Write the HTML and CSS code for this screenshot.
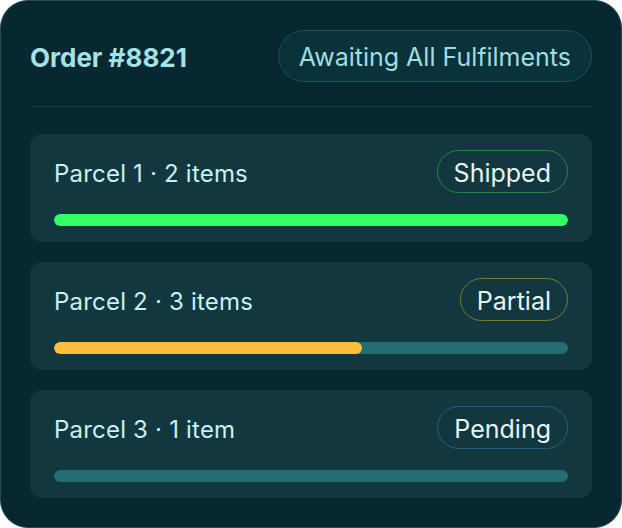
FILE: index.html
```html
<!DOCTYPE html>
<html>
<head>
<meta charset="utf-8">
<link rel="stylesheet" href="styles.css">
</head>
<body>
<div class="card">
  <div class="header">
    <div class="title">Order #8821</div>
    <div class="status">Awaiting All Fulfilments</div>
  </div>
  <div class="divider"></div>
  <div class="parcels">
    <div class="parcel">
      <div class="row">
        <div class="label">Parcel 1 · 2 items</div>
        <div class="badge shipped">Shipped</div>
      </div>
      <div class="track"><div class="fill green" style="width:100%"></div></div>
    </div>
    <div class="parcel">
      <div class="row">
        <div class="label">Parcel 2 · 3 items</div>
        <div class="badge partial">Partial</div>
      </div>
      <div class="track"><div class="fill amber" style="width:60%"></div></div>
    </div>
    <div class="parcel">
      <div class="row">
        <div class="label">Parcel 3 · 1 item</div>
        <div class="badge pending">Pending</div>
      </div>
      <div class="track"><div class="fill" style="width:0%"></div></div>
    </div>
  </div>
</div>
</body>
</html>
```
FILE: styles.css
```css
* { box-sizing: border-box; }
html, body { margin: 0; padding: 0; background: #ffffff; }
body { font-family: Inter, "Noto Sans", sans-serif; }
.card {
  width: 622px;
  height: 528px;
  background: #072830;
  border: 1.5px solid #1c4f56;
  border-radius: 28px;
  padding: 29px 29px 29px 29px;
}
.header {
  display: flex;
  justify-content: space-between;
  align-items: center;
}
.title {
  font-size: 26px;
  font-weight: 700;
  color: #a3e2e6;
  padding-top: 2px;
}
.status {
  height: 52px;
  padding: 0 20px;
  display: flex;
  align-items: center;
  border: 1px solid #1d4f56;
  background: #0a323a;
  border-radius: 26px;
  font-size: 25px;
  color: #9fdde0;
  padding-top: 2px;
}
.divider {
  height: 1px;
  background: #12393f;
  margin: 24px 0 27px;
}
.parcels {
  display: flex;
  flex-direction: column;
  gap: 20px;
}
.parcel {
  height: 108px;
  background: #12373f;
  border-radius: 12px;
  padding: 16px 24px;
  display: flex;
  flex-direction: column;
}
.row {
  display: flex;
  justify-content: space-between;
  align-items: center;
  height: 43px;
}
.label {
  font-size: 24px;
  color: #c6f1f1;
  letter-spacing: 0.2px;
  padding-top: 3px;
}
.badge {
  height: 43px;
  padding: 2px 16px 0;
  display: flex;
  align-items: center;
  border-radius: 22px;
  font-size: 25px;
  color: #e4f6f4;
  border: 1px solid;
}
.shipped { border-color: #1f8a3e; }
.partial { border-color: #7c7a35; }
.pending { border-color: #1f5f8a; }
.track {
  margin-top: 21px;
  height: 12px;
  border-radius: 6px;
  background: #246b75;
  overflow: hidden;
}
.fill { height: 100%; border-radius: 6px; }
.green { background: #33ff66; }
.amber { background: #ffbd3a; }
```
